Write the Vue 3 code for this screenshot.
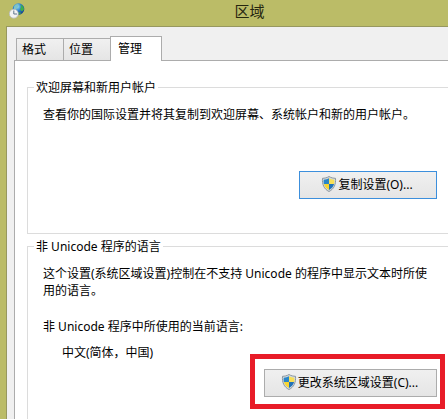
<script setup>
import { ref } from 'vue'

const tabs = ['格式', '位置', '管理']
const active = ref('管理')
</script>

<template>
  <div class="window">
    <header class="titlebar">
      <svg class="app-icon" viewBox="0 0 16 16" aria-hidden="true">
        <defs>
          <radialGradient id="globe" cx="0.4" cy="0.3" r="0.75">
            <stop offset="0" stop-color="#9fe0f5" />
            <stop offset="0.45" stop-color="#2f86cf" />
            <stop offset="1" stop-color="#0c2f86" />
          </radialGradient>
        </defs>
        <circle cx="9.5" cy="6" r="5.8" fill="url(#globe)" />
        <path d="M5 3.5C6.5 1.5 8.5 1 9.5 1.5L9 4 7 6.500 5 6Z" fill="#7fc4c8" />
        <path d="M11.500 1.500C14 2.500 15 4.500 15 6.500L13 8.500 11 6.500 12 4Z" fill="#3fae49" />
        <path d="M9.500 9L12 9.500 11.500 11.300 9.500 11.500Z" fill="#3a9e58" />
        <circle cx="4.800" cy="10.700" r="4.500" fill="#f2f3f2" stroke="#b4b8b8" stroke-width="0.8" />
        <path d="M4.800 7.500V11H8" fill="none" stroke="#60758c" stroke-width="1" />
      </svg>
      <h1 class="title">区域</h1>
    </header>

    <main class="client">
      <div class="tabs" role="tablist">
        <button
          v-for="tab in tabs"
          :key="tab"
          type="button"
          role="tab"
          class="tab"
          :class="{ active: tab === active }"
          :aria-selected="tab === active"
          @click="active = tab"
        >{{ tab }}</button>
      </div>

      <section class="panel" role="tabpanel">
        <fieldset class="group welcome">
          <legend>欢迎屏幕和新用户帐户</legend>
          <p>查看你的国际设置并将其复制到欢迎屏幕、系统帐户和新的用户帐户。</p>
          <div class="actions">
            <button type="button" class="button copy">
              <svg class="shield" viewBox="0 0 16 16" aria-hidden="true">
                <path d="M8 0.500C10 1.800 12.500 2.300 14.500 2.300C15 8.500 13 13 8 15.500C3 13 1 8.500 1.500 2.300C3.500 2.300 6 1.800 8 0.500Z" fill="#d4dbe0" stroke="#8b969e" stroke-width="1" />
                <path d="M8 2.200V8H2.900C2.600 6.600 2.500 5.200 2.700 3.700C4.700 3.500 6.400 3.100 8 2.200Z" fill="#2a86c8" />
                <path d="M8 2.200V8H13.100C13.400 6.600 13.500 5.200 13.300 3.700C11.300 3.500 9.600 3.100 8 2.200Z" fill="#f8df55" />
                <path d="M8 8V14C5.300 12.600 3.600 10.600 2.900 8Z" fill="#f8d532" />
                <path d="M8 8V14C10.700 12.600 12.400 10.600 13.100 8Z" fill="#2271b8" />
              </svg>
              <span>复制设置(O)...</span>
            </button>
          </div>
        </fieldset>

        <fieldset class="group locale">
          <legend>非 Unicode 程序的语言</legend>
          <p>这个设置(系统区域设置)控制在不支持 Unicode 的程序中显示文本时所使用的语言。</p>
          <dl>
            <dt>非 Unicode 程序中所使用的当前语言:</dt>
            <dd>中文(简体，中国)</dd>
          </dl>
          <div class="actions">
            <div class="highlight">
              <button type="button" class="button">
                <svg class="shield" viewBox="0 0 16 16" aria-hidden="true">
                  <path d="M8 0.500C10 1.800 12.500 2.300 14.500 2.300C15 8.500 13 13 8 15.500C3 13 1 8.500 1.500 2.300C3.500 2.300 6 1.800 8 0.500Z" fill="#d4dbe0" stroke="#8b969e" stroke-width="1" />
                  <path d="M8 2.200V8H2.900C2.600 6.600 2.500 5.200 2.700 3.700C4.700 3.500 6.400 3.100 8 2.200Z" fill="#2a86c8" />
                  <path d="M8 2.200V8H13.100C13.400 6.600 13.500 5.200 13.300 3.700C11.300 3.500 9.600 3.100 8 2.200Z" fill="#f8df55" />
                  <path d="M8 8V14C5.300 12.600 3.600 10.600 2.900 8Z" fill="#f8d532" />
                  <path d="M8 8V14C10.700 12.600 12.400 10.600 13.100 8Z" fill="#2271b8" />
                </svg>
                <span>更改系统区域设置(C)...</span>
              </button>
            </div>
          </div>
        </fieldset>
      </section>
    </main>
  </div>
</template>

<style>
body {
  margin: 0;
}
</style>

<style scoped>
.window {
  box-sizing: border-box;
  display: flex;
  flex-direction: column;
  min-height: 100vh;
  padding-left: 6px;
  overflow: hidden;
  background: #bbbc67;
  color: #000;
  font: 12px/17px "Noto Sans", "Noto Sans CJK SC", sans-serif;
}

.titlebar {
  display: flex;
  align-items: flex-start;
  height: 26px;
  padding-left: 3px;
}

.app-icon {
  flex: none;
  width: 16px;
  height: 16px;
  margin-top: 3px;
}

.title {
  flex: 1;
  margin: 0;
  padding-left: 26px;
  text-align: center;
  font-size: 15px;
  line-height: 22px;
  font-weight: 400;
  color: #26260f;
}

.client {
  flex: 1;
  display: flex;
  flex-direction: column;
  padding: 9px 0 0 7px;
  border: solid #97985f;
  border-width: 1px 0 0 1px;
  background: #f0f0f0;
}

.tabs {
  display: flex;
  align-items: flex-end;
  padding-left: 2px;
}

.tab {
  box-sizing: border-box;
  width: 48px;
  height: 22px;
  padding: 0 0 0 5px;
  border: 1px solid #acacac;
  border-bottom: 0;
  background: linear-gradient(#f0f0f0, #e5e5e5);
  color: inherit;
  font: inherit;
  text-align: left;
}

.tab + .tab {
  margin-left: -1px;
}

.tab.active {
  position: relative;
  width: 52px;
  height: 25px;
  margin-bottom: -1px;
  padding: 0 0 2px 7px;
  background: #fff;
}

.panel {
  flex: 1;
  display: flex;
  flex-direction: column;
  padding: 18px 0 0 12px;
  border: solid #acacac;
  border-width: 1px 0 0 1px;
  background: #fff;
}

.group {
  min-width: 0;
  margin: 0;
  padding: 0 11px 0 15px;
  border: solid #dcdcdc;
  border-width: 1px 0 1px 1px;
}

.group legend {
  margin-left: -9px;
  padding: 0 2px;
}

.group p {
  margin: 10px 0 0;
}

.welcome .actions {
  padding: 48px 0 34px;
}

.locale {
  flex: 1;
  margin-top: 4px;
  border-bottom: 0;
}

dl {
  margin: 19px 0 0;
}

dd {
  margin: 9px 0 0 19px;
}

.locale .actions {
  padding: 8px 0 21px;
}

.actions {
  display: flex;
  justify-content: flex-end;
}

.button {
  box-sizing: border-box;
  display: flex;
  align-items: center;
  justify-content: center;
  gap: 1px;
  width: 173px;
  height: 28px;
  padding: 0 2px 2px 0;
  border: 1px solid #acacac;
  background: linear-gradient(#f0f0f0, #e5e5e5);
  color: inherit;
  font: inherit;
}

.button.copy {
  width: 138px;
  border-color: #3c8fdc;
}

.shield {
  width: 16px;
  height: 16px;
}

.highlight {
  position: relative;
}

.highlight::after {
  content: "";
  position: absolute;
  inset: -15px -8px -12px -14px;
  border: 5px solid #e81c28;
  pointer-events: none;
}
</style>
